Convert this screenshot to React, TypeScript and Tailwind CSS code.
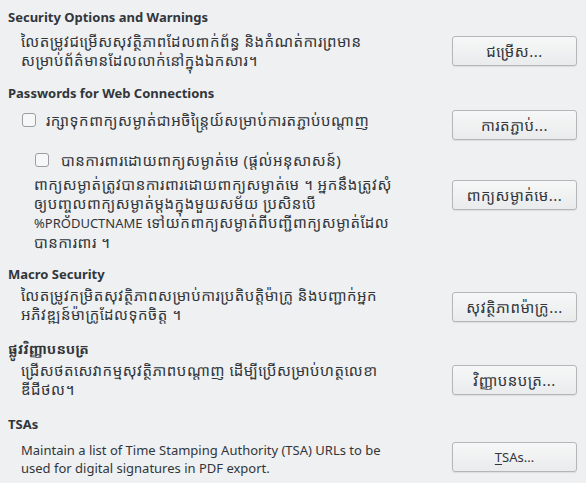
import React from 'react';

const font = { fontFamily: '"Noto Sans", "Noto Sans Khmer", "Khmer OS", sans-serif' };

// Khmer glyphs in the reference are drawn noticeably larger than the latin text
const km = 'text-[15px] tracking-[0.5px]';

const Button: React.FC<{ children: React.ReactNode; className?: string }> = ({ children, className = '' }) => (
  <button
    className={`w-[125px] h-[30px] shrink-0 rounded-[3px] border border-[#b4b6b8] bg-gradient-to-b from-[#f6f7f7] to-[#eaebec] text-[13px] leading-[18px] text-[#31363b] shadow-[0_1px_1px_rgba(0,0,0,0.08)] ${className}`}
  >
    {children}
  </button>
);

const Checkbox: React.FC = () => (
  <span className="inline-block w-[14px] h-[14px] shrink-0 rounded-[3px] border border-[#9c9ea1] bg-[#f7f7f7]" />
);

const Heading: React.FC<{ children: React.ReactNode; className?: string }> = ({ children, className = '' }) => (
  <h2 className={`pl-2 text-[13px] leading-[18px] font-bold text-[#31363b] ${className}`}>{children}</h2>
);

export default function App() {
  return (
    <div style={font} className="w-[586px] h-[483px] overflow-hidden bg-[#eff0f1] text-[#31363b] text-[13px]">
      {/* Security options */}
      <Heading className="pt-2">Security Options and Warnings</Heading>
      <div className="flex items-start mt-[6px] pl-[21px] pr-[9px]">
        <p className={`flex-1 leading-[19px] ${km}`}>
          លៃតម្រូវជម្រើសសុវត្ថិភាពដែលពាក់ព័ន្ធ និងកំណត់ការព្រមាន
          <br />
          សម្រាប់ព័ត៌មានដែលលាក់នៅក្នុងឯកសារ។
        </p>
        <Button className="mt-[4px]"><span className={km}>ជម្រើស...</span></Button>
      </div>

      {/* Web passwords */}
      <Heading className="mt-[14px]">Passwords for Web Connections</Heading>
      <div className="flex items-start mt-[8px] pl-[22px] pr-[9px]">
        <label className="flex-1 flex items-center gap-[10px] h-[20px] leading-[19px]">
          <Checkbox />
          <span className={km}>រក្សាទុកពាក្យសម្ងាត់ជាអចិន្ត្រៃយ៍សម្រាប់ការតភ្ជាប់បណ្ដាញ</span>
        </label>
        <Button><span className={km}>ការតភ្ជាប់...</span></Button>
      </div>
      <label className="flex items-center gap-[12px] h-[20px] mt-[10px] pl-[35px] leading-[19px]">
        <Checkbox />
        <span className={km}>បានការពារដោយពាក្យសម្ងាត់មេ (ផ្ដល់អនុសាសន៍)</span>
      </label>
      <div className="flex items-start mt-[5px] pl-[34px] pr-[9px]">
        <p className={`flex-1 leading-[19px] ${km}`}>
          ពាក្យសម្ងាត់ត្រូវបានការពារដោយពាក្យសម្ងាត់មេ ។ អ្នកនឹងត្រូវសុំ
          <br />
          ឲ្យបញ្ចូលពាក្យសម្ងាត់ម្ដងក្នុងមួយសម័យ ប្រសិនបើ
          <br />
          <span className="text-[13px] tracking-normal">%PRODUCTNAME</span> ទៅយកពាក្យសម្ងាត់ពីបញ្ជីពាក្យសម្ងាត់ដែល
          <br />
          បានការពារ ។
        </p>
        <Button className="mt-[5px]"><span className={km}>ពាក្យសម្ងាត់មេ...</span></Button>
      </div>

      {/* Macro security */}
      <Heading className="mt-[13px]">Macro Security</Heading>
      <div className="flex items-start mt-[3px] pl-[21px] pr-[9px]">
        <p className={`flex-1 leading-[19px] ${km}`}>
          លៃតម្រូវកម្រិតសុវត្ថិភាពសម្រាប់ការប្រតិបត្តិម៉ាក្រូ និងបញ្ជាក់អ្នក
          <br />
          អភិវឌ្ឍន៍ម៉ាក្រូដែលទុកចិត្ត ។
        </p>
        <Button className="mt-[6px]"><span className={km}>សុវត្ថិភាពម៉ាក្រូ...</span></Button>
      </div>

      {/* Certificate path */}
      <Heading className="mt-[16px] text-[14px]">ផ្លូវវិញ្ញាបនបត្រ</Heading>
      <div className="flex items-start mt-[3px] pl-[21px] pr-[9px]">
        <p className={`flex-1 leading-[19px] ${km}`}>
          ជ្រើសថតសេវាកម្មសុវត្ថិភាពបណ្ដាញ ដើម្បីប្រើសម្រាប់ហត្ថលេខា
          <br />
          ឌីជីថល។
        </p>
        <Button className="mt-[4px]"><span className={km}>វិញ្ញាបនបត្រ...</span></Button>
      </div>

      {/* TSAs */}
      <Heading className="mt-[16px]">TSAs</Heading>
      <div className="flex items-start mt-[8px] pl-[21px] pr-[9px]">
        <p className="flex-1 leading-[18px]">
          Maintain a list of Time Stamping Authority (TSA) URLs to be
          <br />
          used for digital signatures in PDF export.
        </p>
        <Button className="mt-[1px]">
          <span className="underline underline-offset-2">T</span>SAs...
        </Button>
      </div>
    </div>
  );
}
